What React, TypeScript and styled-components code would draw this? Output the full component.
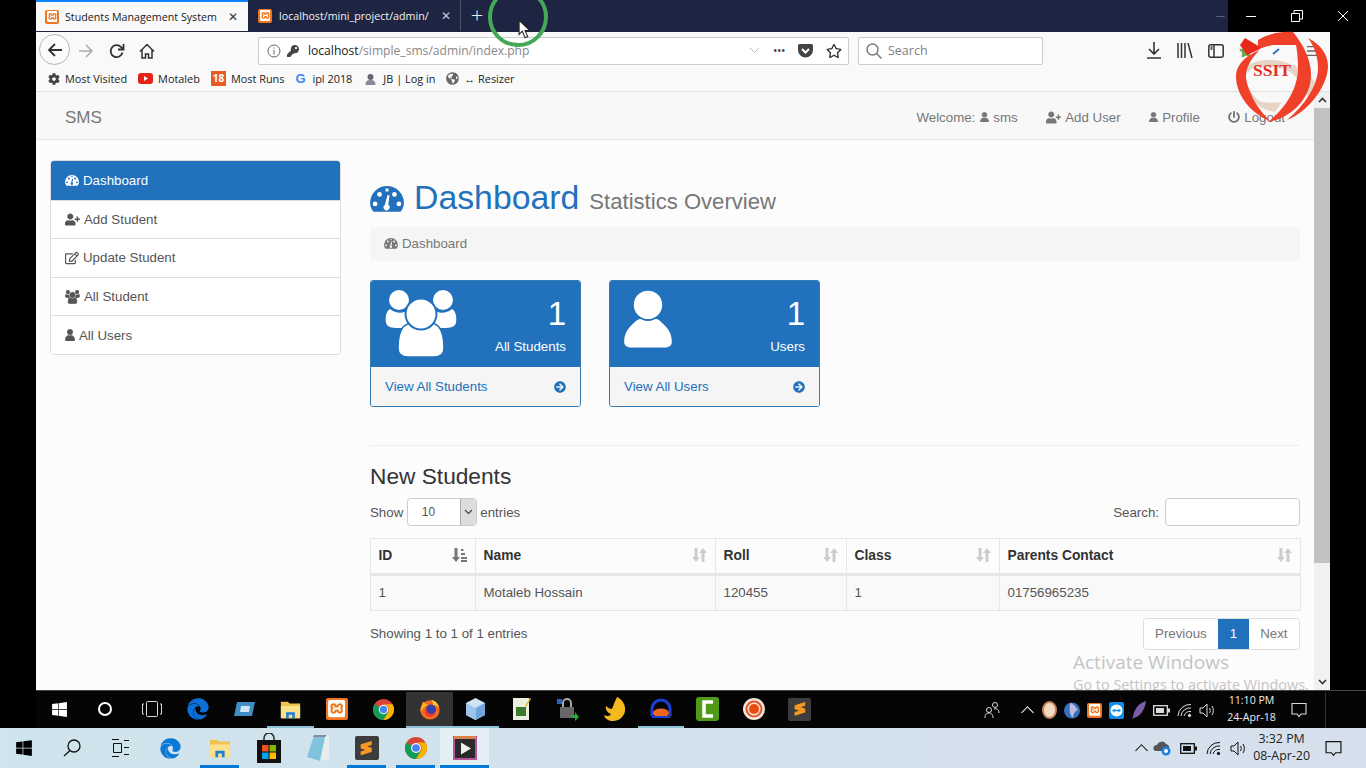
import React from "react";
import styled, { createGlobalStyle } from "styled-components";
import {
  FaUserPlus,
  FaRegEdit,
  FaPowerOff,
  FaArrowCircleRight,
  FaWindows,
  FaEdge,
  FaCog,
  FaGlobeAmericas,
  FaStar,
  FaRegStar,
  FaKey,
} from "react-icons/fa";
import { SiXampp, SiSublimetext } from "react-icons/si";

const BLUE = "#2271bd";
const CHROME_FONT = `"Open Sans", "Noto Sans", sans-serif`;

const GlobalStyle = createGlobalStyle`
  html, body {
    margin: 0;
    padding: 0;
    width: 1366px;
    height: 768px;
    overflow: hidden;
    background: #000;
  }
  * { box-sizing: border-box; }
`;

const GaugeIcon = ({ size, cut }: { size: number; cut: string }) => (
  <svg width={size} height={size * 0.76} viewBox="0 0 34 26" fill="currentColor">
    <path d="M3.500 26C1.300 23.500 0 20.500 0 17a17 17 0 0 1 34 0c0 3.500-1.300 6.500-3.500 9z" />
    <circle cx="5" cy="18" r="2.400" fill={cut} />
    <circle cx="9.500" cy="8.500" r="2.400" fill={cut} />
    <circle cx="24.500" cy="8.500" r="2.400" fill={cut} />
    <circle cx="29" cy="18" r="2.400" fill={cut} />
    <path d="M15.500 2.500h3v3h-3zM17.500 9l2 .4-1.200 9.600a3 3 0 1 1-3.500.1z" fill={cut} />
  </svg>
);

const UsersIcon = ({ size, cut }: { size: number; cut: string }) => (
  <svg width={size} height={size * 0.93} viewBox="0 0 72 67" fill="currentColor">
    <circle cx="14" cy="10" r="10" />
    <circle cx="58" cy="10" r="10" />
    <path d="M5 19c-4 2-5 9-4 14 1 4 5 5 13 5h44c8 0 12-1 13-5 1-5 0-12-4-14-6 5-14 5-20 0H25c-6 5-14 5-20 0z" />
    <path d="M18 37c4-3 7-4 8-4 5 4 15 4 20 0 2 0 5 1 8 4 3 4 5 12 5 21 0 6-4 9-10 9H23c-6 0-10-3-10-9 0-9 2-17 5-21z" stroke={cut} strokeWidth="1.5" />
    <circle cx="36" cy="24" r="15.500" stroke={cut} strokeWidth="2" />
  </svg>
);

const UserIcon = ({ size, cut }: { size: number; cut: string }) => (
  <svg width={size} height={size * 1.2} viewBox="0 0 48 58" fill="currentColor">
    <path d="M10 33c3-3 6-4 7-4 4 3 10 3 14 0 2 0 4 1 7 4 6 5 10 11 10 19 0 4-3 6-8 6H8c-5 0-8-2-8-6 0-8 4-14 10-19z" />
    <circle cx="24" cy="15" r="15" stroke={cut} strokeWidth="1.4" />
  </svg>
);

const SortIcon = ({ dark }: { dark?: boolean }) => (
  <svg width="15" height="14" viewBox="0 0 15 14" fill={dark ? "#777" : "#ccc"}>
    <path d="M2.500 0h3v9H8l-4 5-4-5h2.500z" />
    {dark ? (
      <path d="M9 1h2.500v2H9zM9 5h4v2H9zM9 9h6v2H9zM9 12h6v2H9z" />
    ) : (
      <path d="M9.500 14h3V5H15l-4-5-4 5h2.500z" />
    )}
  </svg>
);

const XamppIcon = ({ size }: { size: number }) => (
  <XamppBox $size={size}>
    <SiXampp size={size * 0.78} color="#fff" />
  </XamppBox>
);

const ChromeIcon = ({ size }: { size: number }) => (
  <svg width={size} height={size} viewBox="0 0 24 24">
    <circle cx="12" cy="12" r="12" fill="#db4437" />
    <path d="M12 12 1.600 6A12 12 0 0 0 12 24l5.200-9z" fill="#0f9d58" />
    <path d="M12 6h10.400A12 12 0 0 1 12 24l5.200-9A6 6 0 0 0 12 6z" fill="#f4b400" />
    <circle cx="12" cy="12" r="5.400" fill="#fff" />
    <circle cx="12" cy="12" r="4.200" fill="#4285f4" />
  </svg>
);

const FirefoxIcon = ({ size }: { size: number }) => (
  <svg width={size} height={size} viewBox="0 0 24 24">
    <circle cx="12" cy="13" r="10.500" fill="#f26b21" />
    <path d="M4 4c0 4-3 6-2 11 2-3 4-6 8-7z" fill="#ffb01f" />
    <circle cx="13" cy="12.500" r="5.500" fill="#3a3fa8" />
    <path d="M13 2c5 1 8 4 9 9-2-3-5-4-7-3 1-2 0-4-2-6z" fill="#ffcb2e" />
    <path d="M8 12c1 5 6 7 10 4-1 4-7 6-10 3-2-2-2-5 0-7z" fill="#e8362a" />
  </svg>
);

const FolderIcon = ({ size }: { size: number }) => (
  <svg width={size} height={size} viewBox="0 0 24 24">
    <path d="M1 3h8l2 2h12v17H1z" fill="#f0c350" />
    <path d="M1 8h22v14H1z" fill="#fbe08c" />
    <path d="M7 22v-7h10v7h-3v-4h-4v4z" fill="#1b80d8" />
  </svg>
);

const StoreIcon = () => (
  <svg width="24" height="30" viewBox="0 0 24 30">
    <path d="M7 8V5a5 5 0 0 1 10 0v3" fill="none" stroke="#222" strokeWidth="1.400" />
    <rect y="7" width="24" height="23" fill="#111" />
    <rect x="5" y="12" width="6.500" height="6.500" fill="#f25022" />
    <rect x="12.500" y="12" width="6.500" height="6.500" fill="#7fba00" />
    <rect x="5" y="19.500" width="6.500" height="6.500" fill="#00a4ef" />
    <rect x="12.500" y="19.500" width="6.500" height="6.500" fill="#ffb900" />
  </svg>
);

const NotepadIcon = () => (
  <svg width="24" height="28" viewBox="0 0 24 28">
    <path d="M8 1h15v24l-9 2-13-4z" fill="#e8eef0" />
    <path d="M8 1 1 23l13 4 5-24z" fill="#7fc3dc" />
    <path d="M8 1h13l-2 2H7z" fill="#8a8f92" />
  </svg>
);

const SublimeIcon = ({ size }: { size: number }) => (
  <SublimeBox $size={size}>
    <SiSublimetext size={size * 0.6} color="#f89820" />
  </SublimeBox>
);

const VideoIcon = () => (
  <svg width="24" height="24" viewBox="0 0 24 24">
    <rect width="24" height="24" fill="#b5549b" />
    <rect x="2" y="3" width="20" height="19" fill="#2a2a2a" />
    <path d="M1 0h22v3H1z" fill="#d9824a" />
    <path d="M8 6.500 18 12.500 8 18.500z" fill="#f1f1f1" />
  </svg>
);

const ActionCenter = ({ size }: { size: number }) => (
  <svg width={size} height={size} viewBox="0 0 16 16" fill="none" stroke="currentColor" strokeWidth="1.100">
    <path d="M1 1.500h14V12h-5l-2 2.500L6 12H1z" />
  </svg>
);

const VolumeIcon = () => (
  <svg width="17" height="15" viewBox="0 0 17 15" fill="none" stroke="currentColor" strokeWidth="1">
    <path d="M1 5h3l4-4v13l-4-4H1z" />
    <path d="M10.500 5c1 1.500 1 3.500 0 5M13 3c1.800 2.500 1.800 6.500 0 9" />
  </svg>
);

const WifiIcon = () => (
  <svg width="15" height="14" viewBox="0 0 15 14" fill="none" stroke="currentColor" strokeWidth="1">
    <path d="M1 13A12 12 0 0 1 14 1.500M4 13a9 9 0 0 1 10-8M7 13a6 6 0 0 1 7-4.500" />
    <circle cx="12.500" cy="12.500" r="1.200" fill="currentColor" />
  </svg>
);

const BatteryIcon = () => (
  <svg width="17" height="11" viewBox="0 0 17 11">
    <rect x=".7" y=".7" width="13.600" height="9.600" fill="none" stroke="currentColor" strokeWidth="1.300" />
    <rect x="3" y="3" width="8" height="5" fill="currentColor" />
    <rect x="15" y="3.500" width="2" height="4" fill="currentColor" />
  </svg>
);

const SsitLogo = () => (
  <LogoWrap>
    <svg width="96" height="95" viewBox="0 0 96 95">
      <path d="M6 45C12 34 21 30 36 30c18 0 36 10 45 22-1 7-3 12-7 16-3-8-6-15-11-20-7-7-14-11-22-11H21C15 39 10 46 8 52z" fill="#e6d5c4" />
      <path d="M11 52c6 10 11 18 17 20 7 1 14 1 20 0l-7 10c-8-1-16-5-20-10-4-5-8-13-10-20z" fill="#e6d5c4" />
      <path d="M24 10C34 4 47 1 59 2l7 13H41c-6 0-12 2-17 5z" fill="#f0402a" />
      <path d="M11 8l15 9-2 3-11 5-7-10z" fill="#e8281a" />
      <path d="M26 20C10 26 2 36 2 46c0 20 16 38 34 45C24 80 14 62 12 48c-1-10 6-21 14-28z" fill="#f0402a" />
      <path d="M59 2c13 16 21 34 17 52-4 18-20 34-42 38 18-14 30-34 30-54 0-14-2-26-5-36z" fill="#f0402a" />
      <path d="M74 8c12 6 20 16 20 28 0 20-20 46-41 54 17-14 31-34 31-52 0-12-4-22-10-30z" fill="#f0402a" />
      <LogoText x="19" y="46">SSIT</LogoText>
    </svg>
  </LogoWrap>
);

const sideItems = [
  { label: "Add Student", icon: <FaUserPlus size={15} /> },
  { label: "Update Student", icon: <FaRegEdit size={14} /> },
  { label: "All Student", icon: <UsersIcon size={15} cut="#fff" /> },
  { label: "All Users", icon: <UserIcon size={10} cut="#fff" /> },
];

const columns = [
  { name: "ID", width: 105, dark: true },
  { name: "Name", width: 240 },
  { name: "Roll", width: 131 },
  { name: "Class", width: 153 },
  { name: "Parents Contact", width: 301 },
];

const row = ["1", "Motaleb Hossain", "120455", "1", "01756965235"];

const App = () => {
  return (
    <Screen>
      <GlobalStyle />
      <Desk>
        {/* Firefox chrome */}
        <TabStrip>
          <ActiveTab>
            <XamppIcon size={14} />
            <TabTitle>Students Management System</TabTitle>
            <TabClose $dark>✕</TabClose>
          </ActiveTab>
          <OtherTab>
            <XamppIcon size={14} />
            <TabTitle $light>localhost/mini_project/admin/</TabTitle>
            <TabClose>✕</TabClose>
          </OtherTab>
          <NewTab>+</NewTab>
          <DimMin>—</DimMin>
          <WindowControls>
            <WinButton>
              <svg width="12" height="12" viewBox="0 0 12 12" stroke="#fff"><path d="M1 6.500h10" /></svg>
            </WinButton>
            <WinButton>
              <svg width="12" height="12" viewBox="0 0 12 12" fill="none" stroke="#fff"><path d="M.5 3.500h8v8h-8zM3 3.500V.5h8.500V9H8.500" /></svg>
            </WinButton>
            <WinButton>
              <svg width="12" height="12" viewBox="0 0 12 12" stroke="#fff"><path d="M1 1l10 10M11 1 1 11" /></svg>
            </WinButton>
          </WindowControls>
        </TabStrip>

        <Toolbar>
          <BackButton>
            <svg width="16" height="16" viewBox="0 0 16 16" fill="none" stroke="#333" strokeWidth="1.800"><path d="M15 8H2M8 2 2 8l6 6" /></svg>
          </BackButton>
          <ToolIcon $width={30}>
            <svg width="16" height="16" viewBox="0 0 16 16" fill="none" stroke="#aaa" strokeWidth="1.500"><path d="M1 8h13M8 2l6 6-6 6" /></svg>
          </ToolIcon>
          <ToolIcon $width={32}>
            <svg width="16" height="16" viewBox="0 0 16 16" fill="none" stroke="#333" strokeWidth="1.800"><path d="M13.500 9.500A6 6 0 1 1 12 4l2 2" /><path d="M14.500 1v5.500H9" /></svg>
          </ToolIcon>
          <ToolIcon $width={28}>
            <svg width="16" height="16" viewBox="0 0 16 16" fill="none" stroke="#333" strokeWidth="1.500"><path d="M1 8.500 8 1.500l7 7M3 7v8h3.500v-4h3v4H13V7" /></svg>
          </ToolIcon>
          <UrlBar>
            <svg width="14" height="14" viewBox="0 0 14 14" fill="none" stroke="#666"><circle cx="7" cy="7" r="6" /><path d="M7 6v4.500M7 3.500v1.200" /></svg>
            <FaKey size={12} color="#444" />
            <UrlText>localhost<UrlPath>/simple_sms/admin/index.php</UrlPath></UrlText>
            <UrlActions>
              <svg width="11" height="7" viewBox="0 0 11 7" fill="none" stroke="#bbb"><path d="m1 1 4.500 4.500L10 1" /></svg>
              <Dots>•••</Dots>
              <svg width="15" height="14" viewBox="0 0 15 14"><path d="M1.500 0h12A1.500 1.500 0 0 1 15 1.500V6A7.500 7.500 0 0 1 0 6V1.500A1.500 1.500 0 0 1 1.500 0z" fill="#444" /><path d="m4 5 3.500 3.500L11 5" fill="none" stroke="#fff" strokeWidth="2" /></svg>
              <FaRegStar size={16} color="#333" />
            </UrlActions>
          </UrlBar>
          <SearchBar>
            <svg width="16" height="16" viewBox="0 0 16 16" fill="none" stroke="#777" strokeWidth="1.400"><circle cx="6.500" cy="6.500" r="5.500" /><path d="m10.500 10.500 5 5" /></svg>
            <SearchHint>Search</SearchHint>
          </SearchBar>
          <ToolRight>
            <svg width="16" height="17" viewBox="0 0 16 17" fill="none" stroke="#333" strokeWidth="1.600"><path d="M8 0v11M3 7l5 5 5-5M1 16h14" /></svg>
            <svg width="16" height="15" viewBox="0 0 16 15" fill="none" stroke="#333" strokeWidth="1.500"><path d="M1 0v15M4.500 0v15M8 0v15M11 0l4 15" /></svg>
            <svg width="16" height="14" viewBox="0 0 16 14" fill="none" stroke="#333" strokeWidth="1.500"><rect x=".8" y=".8" width="14.400" height="12.400" rx="2" /><path d="M6 1v12" /><path d="M2.500 3h2M2.500 5h2" /></svg>
            <FaStar size={14} color="#6aa84f" />
            <svg width="14" height="10" viewBox="0 0 14 10"><path d="M5 8 11 3" stroke="#3b6cc4" strokeWidth="2" /></svg>
            <HamburgerIcon>
              <svg width="12" height="12" viewBox="0 0 14 12" stroke="#666" strokeWidth="1.500"><path d="M0 1h14M0 6h14M0 11h14" /></svg>
            </HamburgerIcon>
          </ToolRight>
        </Toolbar>

        <Bookmarks>
          <Bookmark><FaCog size={12} color="#444" />Most Visited</Bookmark>
          <Bookmark>
            <svg width="15" height="11" viewBox="0 0 15 11"><rect width="15" height="11" rx="3" fill="#e62117" /><path d="m6 3 4 2.500L6 8z" fill="#fff" /></svg>
            Motaleb
          </Bookmark>
          <Bookmark><Badge18>18</Badge18>Most Runs</Bookmark>
          <Bookmark><GoogleG>G</GoogleG>ipl 2018</Bookmark>
          <Bookmark>
            <svg width="15" height="13" viewBox="0 0 15 13"><circle cx="7.500" cy="5" r="3" fill="#667" /><path d="M2.500 13c0-4 2-5 5-5s5 1 5 5z" fill="#889" /></svg>
            JB | Log in
          </Bookmark>
          <Bookmark><FaGlobeAmericas size={13} color="#666" />↔ Resizer</Bookmark>
        </Bookmarks>

        {/* Web page */}
        <PageRow>
          <Page>
            <NavBar>
              <Brand>SMS</Brand>
              <NavLinks>
                <NavLink>Welcome:<UserIcon size={9} cut="#f8f8f8" />sms</NavLink>
                <NavLink><FaUserPlus size={15} />Add User</NavLink>
                <NavLink><UserIcon size={9} cut="#f8f8f8" />Profile</NavLink>
                <NavLink><FaPowerOff size={12} />Logout</NavLink>
              </NavLinks>
            </NavBar>
            <Body>
              <SideList>
                <SideItem $active>
                  <GaugeIcon size={14} cut={BLUE} /> Dashboard
                </SideItem>
                {sideItems.map((item) => (
                  <SideItem key={item.label}>
                    {item.icon} {item.label}
                  </SideItem>
                ))}
              </SideList>
              <Main>
                <Title>
                  <GaugeIcon size={34} cut="#fcfcfc" />
                  <TitleMain>Dashboard</TitleMain>
                  <TitleSub>Statistics Overview</TitleSub>
                </Title>
                <Breadcrumb><GaugeIcon size={14} cut="#f5f5f5" /> Dashboard</Breadcrumb>
                <Cards>
                  <Card>
                    <CardHead>
                      <UsersIcon size={72} cut={BLUE} />
                      <CardStat>
                        <CardNum>1</CardNum>
                        <CardLabel>All Students</CardLabel>
                      </CardStat>
                    </CardHead>
                    <CardFoot>View All Students<FaArrowCircleRight size={12} /></CardFoot>
                  </Card>
                  <Card>
                    <CardHead>
                      <UserIcon size={48} cut={BLUE} />
                      <CardStat>
                        <CardNum>1</CardNum>
                        <CardLabel>Users</CardLabel>
                      </CardStat>
                    </CardHead>
                    <CardFoot>View All Users<FaArrowCircleRight size={12} /></CardFoot>
                  </Card>
                </Cards>
                <Rule />
                <Section>New Students</Section>
                <TableTop>
                  <LengthLabel $gap={3.5}>
                    Show
                    <LengthSelect>
                      <LengthValue>10</LengthValue>
                      <LengthArrow>
                        <svg width="9" height="6" viewBox="0 0 9 6" fill="none" stroke="#444" strokeWidth="1.200"><path d="m1 1 3.500 3.500L8 1" /></svg>
                      </LengthArrow>
                    </LengthSelect>
                    entries
                  </LengthLabel>
                  <LengthLabel $gap={6}>
                    Search:
                    <SearchInput type="text" />
                  </LengthLabel>
                </TableTop>
                <DataTable>
                  <colgroup>
                    {columns.map((c) => (
                      <col key={c.name} width={c.width} />
                    ))}
                  </colgroup>
                  <thead>
                    <tr>
                      {columns.map((c) => (
                        <Th key={c.name}>
                          <ThInner>
                            {c.name}
                            <SortIcon dark={c.dark} />
                          </ThInner>
                        </Th>
                      ))}
                    </tr>
                  </thead>
                  <tbody>
                    <tr>
                      {row.map((v, i) => (
                        <Td key={i}>{v}</Td>
                      ))}
                    </tr>
                  </tbody>
                </DataTable>
                <TableBottom>
                  <ShowingText>Showing 1 to 1 of 1 entries</ShowingText>
                  <Pager>
                    <PageBtn>Previous</PageBtn>
                    <PageBtn $active>1</PageBtn>
                    <PageBtn>Next</PageBtn>
                  </Pager>
                </TableBottom>
              </Main>
            </Body>
          </Page>
          <Scrollbar>
            <ScrollArrow>
              <svg width="9" height="6" viewBox="0 0 9 6" fill="none" stroke="#333" strokeWidth="1.600"><path d="m1 5 3.500-3.500L8 5" /></svg>
            </ScrollArrow>
            <ScrollThumb />
            <ScrollArrow>
              <svg width="9" height="6" viewBox="0 0 9 6" fill="none" stroke="#333" strokeWidth="1.600"><path d="m1 1 3.500 3.500L8 1" /></svg>
            </ScrollArrow>
          </Scrollbar>
        </PageRow>

        {/* Recorded machine taskbar */}
        <InnerTaskbar>
          <InnerSlot><FaWindows size={17} color="#fff" /></InnerSlot>
          <InnerSlot><CortanaRing /></InnerSlot>
          <InnerSlot>
            <svg width="20" height="16" viewBox="0 0 20 16" fill="none" stroke="#ddd"><rect x="4.500" y=".5" width="11" height="15" rx="1" /><path d="M2 3H.5v10H2M18 3h1.500v10H18" /></svg>
          </InnerSlot>
          <InnerSlot><FaEdge size={22} color="#0a6fd8" /></InnerSlot>
          <InnerSlot>
            <svg width="22" height="16" viewBox="0 0 22 16"><path d="M4 1h18l-3 14H1z" fill="#3f8fc4" /><path d="M8 5h9l-1 6H7z" fill="#cfe6f5" /></svg>
          </InnerSlot>
          <InnerSlot $mark><FolderIcon size={21} /></InnerSlot>
          <InnerSlot><XamppIcon size={22} /></InnerSlot>
          <InnerSlot><ChromeIcon size={21} /></InnerSlot>
          <InnerSlot $active $mark><FirefoxIcon size={22} /></InnerSlot>
          <InnerSlot $mark>
            <svg width="19" height="22" viewBox="0 0 19 22"><path d="M9.500 0 19 5v12l-9.500 5L0 17V5z" fill="#cfe3f5" /><path d="M9.500 10 19 5v12l-9.500 5z" fill="#6fa5dc" /><path d="M9.500 10 0 5v12l9.500 5z" fill="#9fc4ea" /></svg>
          </InnerSlot>
          <InnerSlot>
            <svg width="18" height="22" viewBox="0 0 18 22"><rect width="16" height="22" fill="#e9eedd" /><rect x="3" y="9" width="10" height="9" fill="#3b7a2a" /><path d="m12 8 5-8 1 1-5 8z" fill="#e3b62c" /></svg>
          </InnerSlot>
          <InnerSlot>
            <svg width="22" height="24" viewBox="0 0 22 24"><path d="M6 10V6a4 4 0 0 1 8 0v4" fill="none" stroke="#aaa" strokeWidth="2" /><rect x="3" y="10" width="14" height="11" fill="#666" /><path d="M14 18h4v-3l4 5-4 4v-3h-4z" fill="#2aa63c" /><path d="M0 2h5v5H0z" fill="#2464c8" /></svg>
          </InnerSlot>
          <InnerSlot>
            <svg width="22" height="24" viewBox="0 0 22 24"><path d="M13 0c5 2 9 8 8 14-1 6-6 10-12 10-4 0-8-2-9-6 3 2 6 1 7-1-3-1-6-4-5-8 2 2 4 3 6 3 1-3 3-8 5-12z" fill="#f5b81d" /></svg>
          </InnerSlot>
          <InnerSlot $mark>
            <svg width="22" height="22" viewBox="0 0 22 22"><path d="M2 18V11a9 9 0 0 1 18 0v7" fill="none" stroke="#1b3fd8" strokeWidth="3" /><ellipse cx="11" cy="15" rx="8" ry="4.500" fill="#f0661f" /><path d="M2 18h18v2H2z" fill="#1b3fd8" /></svg>
          </InnerSlot>
          <InnerSlot>
            <svg width="23" height="24" viewBox="0 0 23 24"><rect width="23" height="24" rx="3" fill="#4f9a16" /><path d="M17 5H8v14h9" fill="none" stroke="#fff" strokeWidth="3.500" /></svg>
          </InnerSlot>
          <InnerSlot>
            <svg width="22" height="22" viewBox="0 0 22 22"><circle cx="11" cy="11" r="11" fill="#f3e5da" /><circle cx="11" cy="11" r="8.500" fill="#e4582a" /><circle cx="11" cy="11" r="6.500" fill="#f3e5da" /><circle cx="11" cy="11" r="5" fill="#ea4b12" /></svg>
          </InnerSlot>
          <InnerSlot><SublimeIcon size={23} /></InnerSlot>
          <InnerTray>
            <svg width="16" height="18" viewBox="0 0 16 18" fill="none" stroke="#ddd"><circle cx="5" cy="9" r="2.500" /><path d="M1 17c0-4 2-5 4-5s4 1 4 5" /><circle cx="11" cy="4" r="2.500" /><path d="M10 8c3-1 5 1 5 4" /></svg>
            <TrayChevron $color="#fff" $left={15} $right={3} />
            <TrayDot />
            <svg width="16" height="17" viewBox="0 0 16 17"><circle cx="8" cy="8.500" r="8" fill="#3a6fc0" /><path d="M6 1c5 1 6 5 8 7-3 1-5 4-5 8-3-3-4-6-3-15z" fill="#bbd" /></svg>
            <XamppIcon size={15} />
            <svg width="15" height="17" viewBox="0 0 15 17"><rect width="15" height="17" rx="2" fill="#0e8ee9" /><circle cx="7.500" cy="8.500" r="6" fill="#fff" /><path d="M3 8.500 5.500 6.500v1.200h4V6.500l2.500 2-2.500 2V9.300h-4v1.200z" fill="#0e8ee9" /></svg>
            <svg width="14" height="18" viewBox="0 0 14 18"><path d="M14 0C7 2 2 8 1 16l-1 2 2-1c7-2 11-9 12-17z" fill="#7b5ea7" /></svg>
            <BatteryIcon />
            <WifiIcon />
            <VolumeIcon />
            <ClockBox>
              <span>11:10 PM</span>
              <span>24-Apr-18</span>
            </ClockBox>
            <ActionWrap $width={32}>
              <ActionCenter size={16} />
            </ActionWrap>
          </InnerTray>
        </InnerTaskbar>

        <ActivateBox>
          <ActivateTitle>Activate Windows</ActivateTitle>
          <ActivateSub>Go to Settings to activate Windows.</ActivateSub>
        </ActivateBox>
      </Desk>

      <OuterTaskbar>
        <OuterSlot><FaWindows size={18} color="#000" /></OuterSlot>
        <OuterSlot>
          <svg width="18" height="18" viewBox="0 0 18 18" fill="none" stroke="#111" strokeWidth="1.300"><circle cx="11" cy="7" r="6" /><path d="M7 11.500 1 17" /></svg>
        </OuterSlot>
        <OuterSlot $width={50}>
          <svg width="18" height="18" viewBox="0 0 18 18" fill="none" stroke="#111"><path d="M0 .5h7M0 17.500h7M1.500 4.500h8v9h-8zM12 1.500h5M12 8.500h5M12 15.500h5" /></svg>
        </OuterSlot>
        <OuterSlot $width={49}><FaEdge size={21} color="#0a78d7" /></OuterSlot>
        <OuterSlot $width={49} $mark><FolderIcon size={22} /></OuterSlot>
        <OuterSlot $width={49}><StoreIcon /></OuterSlot>
        <OuterSlot $width={49}><NotepadIcon /></OuterSlot>
        <OuterSlot $width={49} $mark><SublimeIcon size={24} /></OuterSlot>
        <OuterSlot $width={49} $mark><ChromeIcon size={22} /></OuterSlot>
        <OuterSlot $width={49} $mark $active><VideoIcon /></OuterSlot>
        <OuterTray>
          <TrayChevron $color="#111" $left={0} $right={-2} />
          <svg width="18" height="16" viewBox="0 0 18 16"><path d="M3 11a3 3 0 0 1 1-6 5 5 0 0 1 9-1 4 4 0 0 1 2 7z" fill="#555" /><circle cx="13" cy="11" r="4.500" fill="#1d7fe0" /><circle cx="13" cy="11" r="2" fill="#fff" /></svg>
          <BatteryIcon />
          <WifiIcon />
          <VolumeIcon />
          <ClockBox $dark>
            <span>3:32 PM</span>
            <span>08-Apr-20</span>
          </ClockBox>
          <ActionWrap $width={32}>
            <ActionCenter size={17} />
          </ActionWrap>
        </OuterTray>
      </OuterTaskbar>

      <GreenRing />
      <Cursor>
        <svg width="13" height="20" viewBox="0 0 12 18"><path d="M1 1v13l3-3 2.500 6 2.500-1-2.500-5.500H11z" fill="#fff" stroke="#222" /></svg>
      </Cursor>
      <SsitLogo />
    </Screen>
  );
};

export default App;

const Screen = styled.div`
  position: relative;
  width: 1366px;
  height: 768px;
  overflow: hidden;
  display: flex;
  flex-direction: column;
  font-family: "Liberation Sans", Arial, sans-serif;
`;

const Desk = styled.div`
  position: relative;
  height: 728px;
  background: #000;
  padding-left: 36px;
  display: flex;
  flex-direction: column;
`;

const TabStrip = styled.div`
  height: 32px;
  background: #1e2542;
  display: flex;
  align-items: stretch;
  font-family: ${CHROME_FONT};
  font-size: 10.7px;
`;

const ActiveTab = styled.div`
  width: 212px;
  height: 31px;
  background: #f9f9f9;
  border-top: 2px solid #0a84ff;
  display: flex;
  align-items: center;
  padding: 0 10px 0 9px;
  gap: 6px;
`;

const OtherTab = styled.div`
  width: 213px;
  height: 31px;
  display: flex;
  align-items: center;
  padding: 0 9px 0 10px;
  gap: 7px;
  border-right: 1px solid #4a5068;
`;

const TabTitle = styled.span<{ $light?: boolean }>`
  flex: 1;
  white-space: nowrap;
  color: ${({ $light }) => ($light ? "#f1f1f1" : "#222")};
`;

const TabClose = styled.span<{ $dark?: boolean }>`
  font-size: 12px;
  color: ${({ $dark }) => ($dark ? "#333" : "#ccc")};
`;

const NewTab = styled.div`
  width: 32px;
  height: 31px;
  text-align: center;
  color: #eee;
  font-size: 22px;
  line-height: 29px;
  font-weight: 300;
`;

const DimMin = styled.div`
  margin-left: auto;
  color: #8a90a6;
  font-size: 9px;
  line-height: 31px;
  padding-right: 3px;
`;

const WindowControls = styled.div`
  width: 138px;
  background: #000;
  display: flex;
  align-items: center;
`;

const WinButton = styled.div`
  width: 46px;
  display: flex;
  justify-content: center;
`;

const Toolbar = styled.div`
  width: 1294px;
  height: 33px;
  background: #f9f9f9;
  display: flex;
  align-items: center;
  padding: 4px 0 0 3px;
`;

const BackButton = styled.div`
  width: 31px;
  height: 31px;
  margin-top: -2px;
  border-radius: 50%;
  background: #fbfbfb;
  border: 1px solid #b5b5b5;
  display: flex;
  align-items: center;
  justify-content: center;
  margin-right: 1px;
`;

const ToolIcon = styled.div<{ $width: number }>`
  width: ${({ $width }) => $width}px;
  display: flex;
  justify-content: center;
`;

const UrlBar = styled.div`
  width: 591px;
  height: 28px;
  margin-left: 97px;
  background: #fff;
  border: 1px solid #ccc;
  border-radius: 2px;
  display: flex;
  align-items: center;
  padding: 0 6px 0 8px;
  gap: 6px;
  font-family: ${CHROME_FONT};
`;

const UrlText = styled.span`
  margin-left: 3px;
  font-size: 12.1px;
  color: #222;
`;

const UrlPath = styled.span`
  color: #888;
`;

const UrlActions = styled.div`
  margin-left: auto;
  display: flex;
  align-items: center;
  gap: 13px;
`;

const Dots = styled.span`
  font-size: 12px;
  color: #444;
  letter-spacing: -0.5px;
`;

const SearchBar = styled.div`
  width: 185px;
  height: 28px;
  margin-left: 9px;
  background: #fff;
  border: 1px solid #ccc;
  border-radius: 2px;
  display: flex;
  align-items: center;
  padding-left: 7px;
  gap: 6px;
  font-family: ${CHROME_FONT};
`;

const SearchHint = styled.span`
  font-size: 12.5px;
  color: #808080;
`;

const ToolRight = styled.div`
  flex: 1;
  margin-left: 103px;
  display: flex;
  align-items: center;
  gap: 15px;
`;

const HamburgerIcon = styled.div`
  margin-left: auto;
  margin-right: 11px;
  display: flex;
`;

const Bookmarks = styled.div`
  width: 1294px;
  height: 27px;
  padding: 1px 0 0 12px;
  background: #f9f9f9;
  border-bottom: 1px solid #e0e0e0;
  display: flex;
  align-items: center;
  gap: 11px;
  font-family: ${CHROME_FONT};
  font-size: 10.9px;
  color: #222;
`;

const Bookmark = styled.div`
  display: flex;
  align-items: center;
  gap: 5px;
  white-space: nowrap;
`;

const Badge18 = styled.span`
  width: 15px;
  height: 15px;
  background: #ec5a24;
  color: #fff;
  font-size: 10px;
  font-weight: 700;
  line-height: 15px;
  text-align: center;
`;

const GoogleG = styled.span`
  width: 12px;
  color: #4285f4;
  font-weight: 700;
  font-size: 13px;
  font-family: "Liberation Sans", sans-serif;
`;

const PageRow = styled.div`
  width: 1294px;
  height: 598px;
  display: flex;
  background: #fcfcfc;
  overflow: hidden;
`;

const Page = styled.div`
  width: 1278px;
  font-size: 13.3px;
  line-height: 19px;
  color: #555;
`;

const NavBar = styled.div`
  height: 48px;
  padding: 3px 29px 0;
  background: #f8f8f8;
  border-bottom: 1px solid #e7e7e7;
  display: flex;
  align-items: center;
  justify-content: space-between;
`;

const Brand = styled.div`
  font-size: 17px;
  color: #777;
`;

const NavLinks = styled.div`
  display: flex;
  gap: 28px;
`;

const NavLink = styled.div`
  display: flex;
  align-items: center;
  gap: 4.5px;
  color: #777;
  white-space: nowrap;
`;

const Body = styled.div`
  display: flex;
  padding: 20px 14px 0;
  gap: 29px;
  align-items: flex-start;
`;

const SideList = styled.div`
  width: 291px;
  background: #fff;
  border: 1px solid #ddd;
  border-radius: 4px;
  overflow: hidden;
`;

const SideItem = styled.div<{ $active?: boolean }>`
  height: 38.6px;
  display: flex;
  align-items: center;
  gap: 4px;
  padding-left: 14px;
  background: ${({ $active }) => ($active ? BLUE : "#fff")};
  color: ${({ $active }) => ($active ? "#fff" : "#555")};
  & + & {
    border-top: 1px solid #ddd;
  }
`;

const Main = styled.div`
  width: 930px;
`;

const Title = styled.div`
  height: 67px;
  display: flex;
  align-items: flex-end;
  color: ${BLUE};
  padding-bottom: 15px;
`;

const TitleMain = styled.span`
  font-size: 33.8px;
  line-height: 36px;
  margin: 0 0 -3px 10px;
`;

const TitleSub = styled.span`
  font-size: 22.1px;
  line-height: 30px;
  margin: 0 0 -5px 10px;
  color: #777;
`;

const Breadcrumb = styled.div`
  height: 34px;
  background: #f5f5f5;
  border-radius: 4px;
  display: flex;
  align-items: center;
  gap: 4px;
  padding: 0 0 1px 14px;
  color: #777;
`;

const Cards = styled.div`
  display: flex;
  gap: 28px;
  margin-top: 19px;
`;

const Card = styled.div`
  width: 211px;
  height: 127px;
  border: 1px solid #337ab7;
  border-radius: 3px;
  overflow: hidden;
`;

const CardHead = styled.div`
  height: 86px;
  background: ${BLUE};
  color: #fff;
  display: flex;
  justify-content: space-between;
  padding: 9px 14px 0 14px;
`;

const CardStat = styled.div`
  display: flex;
  flex-direction: column;
  align-items: flex-end;
`;

const CardNum = styled.div`
  font-size: 33px;
  line-height: 38px;
  margin-top: 5px;
`;

const CardLabel = styled.div`
  margin-top: 4px;
`;

const CardFoot = styled.div`
  height: 39px;
  background: #f5f5f5;
  display: flex;
  align-items: center;
  justify-content: space-between;
  padding: 0 14px;
  color: ${BLUE};
`;

const Rule = styled.div`
  height: 1px;
  background: #eee;
  margin-top: 38px;
`;

const Section = styled.div`
  font-size: 22.7px;
  line-height: 26px;
  color: #333;
  margin-top: 17px;
`;

const TableTop = styled.div`
  display: flex;
  justify-content: space-between;
  align-items: center;
  margin-top: 9px;
  height: 28px;
`;

const LengthLabel = styled.label<{ $gap: number }>`
  display: flex;
  align-items: center;
  gap: ${({ $gap }) => $gap}px;
`;

const LengthSelect = styled.div`
  width: 70px;
  height: 28px;
  background: #fff;
  border: 1px solid #ccc;
  border-radius: 4px;
  display: flex;
  overflow: hidden;
`;

const LengthValue = styled.span`
  flex: 1;
  font-size: 12px;
  line-height: 26px;
  padding-left: 14px;
`;

const LengthArrow = styled.span`
  width: 16px;
  background: #ddd;
  border-left: 1px solid #aaa;
  display: flex;
  align-items: center;
  justify-content: center;
`;

const SearchInput = styled.input`
  width: 135px;
  height: 28px;
  border: 1px solid #ccc;
  border-radius: 4px;
  background: #fff;
`;

const DataTable = styled.table`
  width: 929px;
  table-layout: fixed;
  border-collapse: collapse;
  margin-top: 12px;
`;

const Th = styled.th`
  height: 36px;
  padding: 0 8px 2px 7.5px;
  text-align: left;
  color: #333;
  font-size: 13.8px;
  border: 1px solid #e6e6e6;
  border-bottom-width: 3px;
`;

const ThInner = styled.div`
  display: flex;
  justify-content: space-between;
  align-items: center;
`;

const Td = styled.td`
  height: 36px;
  padding: 0 8px 2px 7.5px;
  background: #f9f9f9;
  border: 1px solid #e6e6e6;
`;

const TableBottom = styled.div`
  display: flex;
  justify-content: space-between;
  align-items: center;
  margin-top: 7px;
  height: 32px;
`;

const ShowingText = styled.span`
  margin-bottom: 2px;
`;

const Pager = styled.div`
  display: flex;
  background: #fff;
  border: 1px solid #ddd;
  border-radius: 4px;
  overflow: hidden;
`;

const PageBtn = styled.div<{ $active?: boolean }>`
  padding: 0 11.5px;
  line-height: 30px;
  color: ${({ $active }) => ($active ? "#fff" : "#777")};
  background: ${({ $active }) => ($active ? BLUE : "#fff")};
`;

const Scrollbar = styled.div`
  width: 16px;
  background: #f1f1f1;
  display: flex;
  flex-direction: column;
`;

const ScrollArrow = styled.div`
  height: 16px;
  display: flex;
  align-items: center;
  justify-content: center;
`;

const ScrollThumb = styled.div`
  height: 455px;
  background: #c1c1c1;
  margin-bottom: auto;
`;

const InnerTaskbar = styled.div`
  height: 38px;
  padding-top: 1px;
  background: #050505;
  display: flex;
  align-items: stretch;
  color: #ddd;
  border-top: 1px solid #444;
`;

const InnerSlot = styled.div<{ $active?: boolean; $mark?: boolean }>`
  width: 46.3px;
  display: flex;
  align-items: center;
  justify-content: center;
  background: ${({ $active }) => ($active ? "#333" : "transparent")};
  border-bottom: 2px solid ${({ $mark }) => ($mark ? "#8fc4d8" : "transparent")};
`;

const CortanaRing = styled.span`
  width: 14px;
  height: 14px;
  border: 2px solid #fff;
  border-radius: 50%;
`;

const InnerTray = styled.div`
  margin: 0 40px 0 auto;
  display: flex;
  align-items: center;
  gap: 7.2px;
  padding-right: 10px;
  border-right: 1px solid #333;
`;

const TrayChevron = styled.span<{ $color: string; $left: number; $right: number }>`
  width: 9px;
  height: 9px;
  margin: 4px ${({ $right }) => $right}px 0 ${({ $left }) => $left}px;
  border-left: 1.5px solid ${({ $color }) => $color};
  border-top: 1.5px solid ${({ $color }) => $color};
  transform: rotate(45deg);
`;

const TrayDot = styled.span`
  width: 15px;
  height: 18px;
  border-radius: 50%;
  background: #f0d9c0;
  border: 2px solid #c9855f;
`;

const ClockBox = styled.div<{ $dark?: boolean }>`
  display: flex;
  flex-direction: column;
  align-items: center;
  margin: ${({ $dark }) => ($dark ? "-2px -2px 0 -3px" : "-3px 0 0 4px")};
  font-family: ${CHROME_FONT};
  font-size: ${({ $dark }) => ($dark ? 12.4 : 10.6)}px;
  line-height: 17px;
  color: ${({ $dark }) => ($dark ? "#222" : "#eee")};
`;

const ActionWrap = styled.div<{ $width: number }>`
  width: ${({ $width }) => $width}px;
  display: flex;
  justify-content: center;
`;

const OuterTaskbar = styled.div`
  height: 40px;
  background: linear-gradient(90deg, #cfe4ec, #d6e0ec);
  display: flex;
  align-items: stretch;
`;

const OuterSlot = styled.div<{ $width?: number; $active?: boolean; $mark?: boolean }>`
  position: relative;
  width: ${({ $width }) => $width ?? 48}px;
  flex: none;
  display: flex;
  align-items: center;
  justify-content: center;
  background: ${({ $active }) => ($active ? "#e3eff4" : "transparent")};
  &:after {
    content: "";
    position: absolute;
    bottom: 0;
    left: ${({ $active }) => ($active ? 0 : 5)}px;
    right: ${({ $active }) => ($active ? 0 : 5)}px;
    height: 3px;
    background: ${({ $mark }) => ($mark ? "#0078d7" : "transparent")};
  }
`;

const OuterTray = styled.div`
  margin-left: auto;
  display: flex;
  align-items: center;
  gap: 9px;
  color: #111;
  padding-right: 17px;
`;

const XamppBox = styled.span<{ $size: number }>`
  width: ${({ $size }) => $size}px;
  height: ${({ $size }) => $size}px;
  border-radius: 2px;
  background: #f0771f;
  display: inline-flex;
  flex: none;
  align-items: center;
  justify-content: center;
`;

const SublimeBox = styled.span<{ $size: number }>`
  width: ${({ $size }) => $size}px;
  height: ${({ $size }) => $size}px;
  background: #3d3d3d;
  border-radius: 2px;
  display: inline-flex;
  align-items: center;
  justify-content: center;
`;

const ActivateBox = styled.div`
  position: absolute;
  left: 1073px;
  top: 650px;
  font-family: ${CHROME_FONT};
  color: #c4c4c4;
  height: 40px;
  overflow: hidden;
  white-space: nowrap;
`;

const ActivateTitle = styled.div`
  font-size: 19px;
  line-height: 24px;
`;

const ActivateSub = styled.div`
  font-size: 14.4px;
  line-height: 22px;
`;

const GreenRing = styled.div`
  position: absolute;
  left: 488px;
  top: -13px;
  width: 60px;
  height: 60px;
  border: 4px solid #45a856;
  border-radius: 50%;
  filter: blur(0.6px);
`;

const Cursor = styled.div`
  position: absolute;
  left: 518px;
  top: 19px;
`;

const LogoWrap = styled.div`
  position: absolute;
  left: 1234px;
  top: 30px;
  width: 96px;
  height: 95px;
`;

const LogoText = styled.text`
  font-family: "Liberation Serif", serif;
  font-weight: 700;
  font-size: 17.5px;
  fill: #e0301e;
`;
